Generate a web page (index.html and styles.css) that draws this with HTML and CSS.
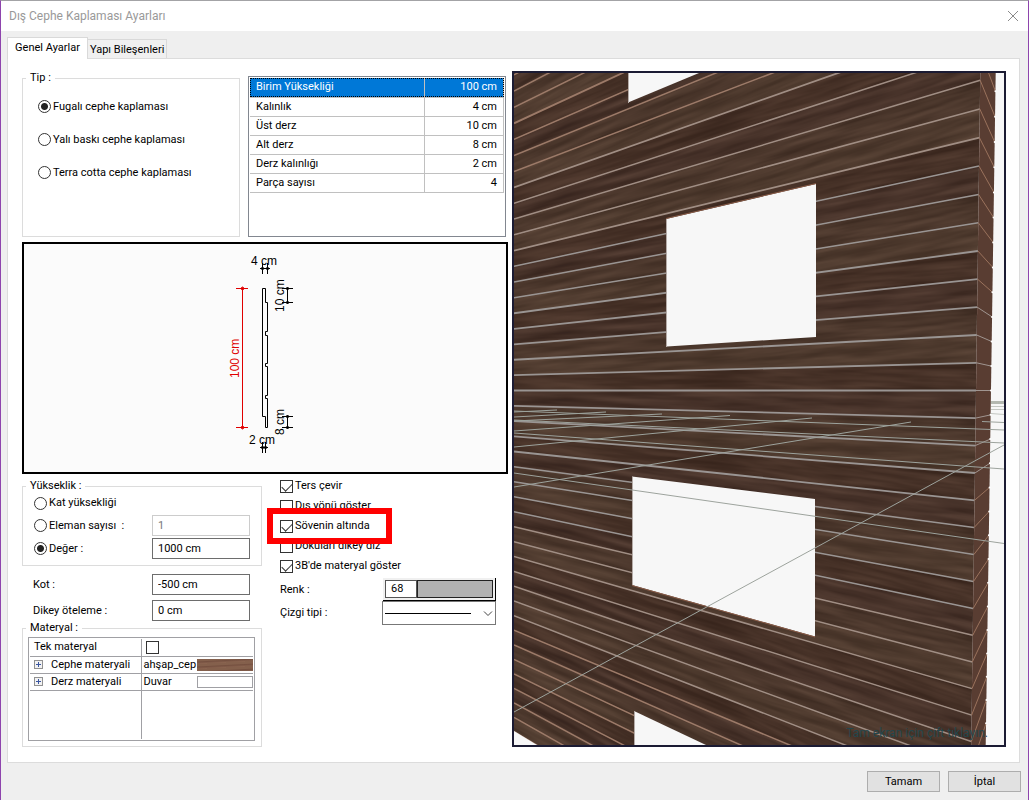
FILE: index.html
```html
<!DOCTYPE html>
<html lang="tr">
<head>
<meta charset="utf-8">
<meta name="viewport" content="width=device-width, initial-scale=1">
<title>Dış Cephe Kaplaması Ayarları</title>
<link rel="stylesheet" href="styles.css">
</head>
<body>
<div class="dialog">
  <header class="titlebar">
    <h1 class="title">Dış Cephe Kaplaması Ayarları</h1>
    <button class="close" type="button" aria-label="Kapat">
      <svg viewBox="0 0 10 10" width="10" height="10"><path d="M0 0 10 10M10 0 0 10" stroke="#8a8a8a" fill="none"/></svg>
    </button>
  </header>

  <nav class="tabs" role="tablist">
    <button class="tab tab-active" type="button" role="tab" aria-selected="true">Genel Ayarlar</button>
    <button class="tab" type="button" role="tab" aria-selected="false">Yapı Bileşenleri</button>
  </nav>

  <main class="panel">
    <div class="settings">
      <div class="top-row">
        <fieldset class="group type-group">
          <legend>Tip :</legend>
          <label class="option"><input type="radio" name="tip" checked>Fugalı cephe kaplaması</label>
          <label class="option"><input type="radio" name="tip">Yalı baskı cephe kaplaması</label>
          <label class="option"><input type="radio" name="tip">Terra cotta cephe kaplaması</label>
        </fieldset>
        <div class="list">
          <table class="props">
            <tr class="selected"><td>Birim Yüksekliği</td><td class="num">100 cm</td></tr>
            <tr><td>Kalınlık</td><td class="num">4 cm</td></tr>
            <tr><td>Üst derz</td><td class="num">10 cm</td></tr>
            <tr><td>Alt derz</td><td class="num">8 cm</td></tr>
            <tr><td>Derz kalınlığı</td><td class="num">2 cm</td></tr>
            <tr><td>Parça sayısı</td><td class="num">4</td></tr>
          </table>
        </div>
      </div>

      <div class="drawing">
        <svg class="drawing-svg" viewBox="24 244 482 228" fill="none" stroke="#000">
          <path d="M262.500 288.500h3v14h2v29h-2v4h2v28h-2v3h2v29h-2v3h2v29h-2v-11h-3z"/>
          <g stroke="#e00000">
            <path d="M242.500 288.500v139M236 288.500h12M236 427.500h12"/>
            <path fill="#e00000" d="M240.500 288.500l2-1.500 2 1.500-2 1.500zM240.500 427.500l2-1.500 2 1.500-2 1.500z"/>
          </g>
          <path d="M287.500 288.500v14M282 288.500h11M282 302.500h11M287.500 416.500v11M282 416.500h11M282 427.500h11"/>
          <path d="M262.500 263v11M267.500 263v11M260 268.500h10M262.500 442v11M265.500 442v11M260 447.500h8"/>
          <path fill="#000" d="M286 288.500l1.500-1.500 1.500 1.500-1.500 1.500zM286 302.500l1.500-1.500 1.500 1.500-1.500 1.500zM286 416.500l1.500-1.500 1.500 1.500-1.500 1.500zM286 427.500l1.500-1.500 1.500 1.500-1.500 1.500zM261 268.500l1.500-1.500 1.500 1.500-1.500 1.500zM266 268.500l1.500-1.500 1.500 1.500-1.500 1.500zM261 447.500l1.500-1.500 1.500 1.500-1.500 1.500zM264 447.500l1.500-1.500 1.500 1.500-1.500 1.500z"/>
          <g class="dim">
            <text x="251" y="265">4 cm</text>
            <text x="249" y="444">2 cm</text>
            <text transform="translate(284 312) rotate(-90)">10 cm</text>
            <text transform="translate(284 435) rotate(-90)">8 cm</text>
            <text class="dim-red" transform="translate(239 378) rotate(-90)">100 cm</text>
          </g>
        </svg>
      </div>

      <div class="bottom-row">
        <div class="left-stack">
          <fieldset class="group height-group">
            <legend>Yükseklik :</legend>
            <div class="row first"><label class="option"><input type="radio" name="h">Kat yüksekliği</label></div>
            <div class="row"><label class="option"><input type="radio" name="h">Eleman sayısı&nbsp; :</label><input class="text" type="text" value="1" aria-label="Eleman sayısı" disabled></div>
            <div class="row"><label class="option"><input type="radio" name="h" checked>Değer :</label><input class="text" type="text" value="1000 cm" aria-label="Değer"></div>
          </fieldset>
          <div class="offsets">
            <div class="row"><label for="kot">Kot :</label><input class="text" id="kot" type="text" value="-500 cm"></div>
            <div class="row"><label for="dikey">Dikey öteleme :</label><input class="text" id="dikey" type="text" value="0 cm"></div>
          </div>
          <fieldset class="group material-group">
            <legend>Materyal :</legend>
            <div class="tree">
              <table class="materials">
                <tr><td><label for="tek">Tek materyal</label></td><td><input type="checkbox" id="tek"></td></tr>
                <tr><td><div class="node"><button class="expand" type="button" aria-label="Genişlet"></button>Cephe materyali</div></td>
                  <td><div class="value"><span class="name">ahşap_cep</span><span class="swatch wood"></span></div></td></tr>
                <tr><td><div class="node"><button class="expand" type="button" aria-label="Genişlet"></button>Derz materyali</div></td>
                  <td><div class="value"><span class="name">Duvar</span><span class="swatch"></span></div></td></tr>
                <tr class="filler"><td></td><td></td></tr>
              </table>
            </div>
          </fieldset>
        </div>

        <div class="right-stack">
          <label class="check"><input type="checkbox" checked>Ters çevir</label>
          <label class="check"><input type="checkbox">Dış yönü göster</label>
          <label class="check marked"><input type="checkbox" checked>Sövenin altında</label>
          <label class="check"><input type="checkbox">Dokuları dikey diz</label>
          <label class="check"><input type="checkbox" checked>3B'de materyal göster</label>
          <div class="pick color-row"><label for="renk">Renk :</label>
            <div class="color"><input id="renk" type="text" value="68"><button class="color-chip" type="button" aria-label="Renk seç"></button></div></div>
          <div class="pick"><label for="cizgi">Çizgi tipi :</label>
            <div class="combo">
              <select id="cizgi"><option aria-label="Düz çizgi"></option></select>
              <svg class="combo-art" viewBox="0 0 112 22" fill="none"><path d="M2 11.500h86" stroke="#000"/><path d="M101 9.500l4 4 4-4" stroke="#444"/></svg>
            </div></div>
        </div>
      </div>
    </div>

    <div class="preview">
      <svg class="scene" id="scene" viewBox="514 73 490 672" preserveAspectRatio="xMidYMid slice">
        <defs>
          <filter id="grain" x="0" y="0" width="1" height="1" color-interpolation-filters="sRGB">
            <feTurbulence type="fractalNoise" baseFrequency="0.012 0.13" numOctaves="3" seed="7"/>
            <feColorMatrix values="0.8 0 0 0 -0.09  0.68 0 0 0 -0.11  0.6 0 0 0 -0.12  0 0 0 0 1"/>
          </filter>
        </defs>
        <g id="wall"></g>
        <g fill="#f7f7f7">
          <path d="M628 73v29.500L699 73z"/>
          <path d="M666 219 816 184V337L667 346.500z"/>
          <path d="M632 476.500 815 499V636.500L632 585z"/>
          <path d="M634 711V745H706z"/>
          <path d="M514 731V745H537z"/>
        </g>
        <g fill="none">
          <path d="M666 218.500 816 183.500M632 585.500 815 637" stroke="#8a5c48"/>
          <path d="M628.500 73v30M666.500 219v128M632.500 477v108M634.500 711v34" stroke="#b5aca8"/>
        </g>
        <g fill="none" stroke="#9da39d">
          <path d="M514 712 1004 445M514 487 911 422M514 447 812 418M514 431 730 415.500M514 421 662 414M514 417 606 412M514 412 557 410"/>
          <path d="M514 473 1004 543.500M514 433 1004 469M514 420 1004 443M514 411 1004 430M982 421.500l22 1"/>
          <path d="M991 406.500h13M991 409.500h13M991 413.500l13 1" stroke="#c4c7c2"/>
          <path d="M991 402.500h13" stroke="#b4b8b0" stroke-width="3"/>
        </g>
        <text class="hint" x="988" y="737" text-anchor="end">Tam ekran için çift tıklayın.</text>
      </svg>
    </div>
  </main>

  <footer class="footer">
    <button class="btn" type="button">Tamam</button>
    <button class="btn" type="button">İptal</button>
  </footer>
</div>
<script src="scene.js"></script>
</body>
</html>
```
FILE: styles.css
```css
* { box-sizing: border-box; }

body {
  margin: 0;
  font: 11px/14px Roboto, "Noto Sans", sans-serif;
  color: #000;
}

button, input, select { font: inherit; color: inherit; margin: 0; }

.dialog {
  min-height: 100vh;
  display: flex;
  flex-direction: column;
  background: #efefef;
  border: 1px solid #8e44ad;
  border-top-color: #a3a3a6;
}

.titlebar {
  display: flex;
  align-items: center;
  justify-content: space-between;
  height: 30px;
  padding: 0 10px 0 8px;
  background: #fff;
}
.title { margin: 0; font: 12px/16px Roboto, sans-serif; color: #999; }
.close { display: flex; padding: 0; border: 0; background: none; }

.tabs { display: flex; align-items: flex-end; height: 27px; padding-left: 6px; }
.tab {
  min-width: 79px;
  height: 19px;
  padding: 2px 2px 0;
  border: 1px solid #d9d9d9;
  border-left: 0;
  border-bottom: 0;
  background: #f0f0f0;
  white-space: nowrap;
}
.tab-active {
  position: relative;
  z-index: 1;
  min-width: 81px;
  height: 22px;
  margin-bottom: -1px;
  padding: 0 6px 1px;
  border-left: 1px solid #d9d9d9;
  background: #fff;
}

.panel {
  flex: 1;
  display: flex;
  gap: 4px;
  margin: 0 8px 0 6px;
  padding: 12px 13px 15px 14px;
  background: #fff;
  border: 1px solid #dcdcdc;
}

.settings { flex: none; width: 486px; display: flex; flex-direction: column; gap: 5px; }

.group { min-width: 0; margin: 0; border: 1px solid #dcdcdc; }
.group legend { margin-left: 3px; padding: 0 4px; line-height: 14px; }

.option, .check { display: flex; align-items: center; gap: 2px; white-space: nowrap; }

input[type="radio"], input[type="checkbox"] {
  appearance: none;
  flex: none;
  width: 13px;
  height: 13px;
  border: 1px solid #333;
  background: #fff;
}
input[type="radio"] { border-radius: 50%; }
input[type="radio"]:checked { background: radial-gradient(circle, #222 0 3px, #fff 4px); }
.check input:checked { display: grid; }
.check input:checked::before {
  content: "";
  width: 9px;
  height: 5px;
  margin: 2px 1px;
  border: solid #333;
  border-width: 0 0 1px 1px;
  transform: rotate(-45deg);
}

.top-row { display: flex; gap: 8px; height: 166px; }
.type-group { width: 218px; padding: 15px 0 0; }
.type-group .option { height: 13px; margin: 0 0 20px 15px; }
.list { flex: 1; margin: 5px 2px 0 0; padding: 1px; border: 1px solid #828790; }
.props { width: 100%; border-collapse: collapse; }
.props td { height: 19px; padding: 2px 6px; border: 1px solid #c0c0c0; border-width: 0 1px 1px 0; }
.props .num { width: 79px; text-align: right; }
.props .selected { background: #0078d7; color: #fff; outline: 1px dotted #000; outline-offset: -1px; }

.drawing { height: 232px; background: #fbfbfb; border: 2px solid #000; }
.drawing-svg { display: block; width: 100%; height: 100%; }
.dim { font: 12px "Liberation Sans", sans-serif; fill: #000; stroke: none; }
.dim-red { fill: #e00000; }

.bottom-row { display: flex; gap: 18px; }
.left-stack { width: 240px; }
.height-group { padding: 0 0 6px; }
.row { display: flex; align-items: center; justify-content: space-between; height: 21px; margin: 0 11px 2px; }
.row.first { height: 20px; }
.height-group .row:last-child { margin-bottom: 0; }
.text {
  width: 98px;
  height: 21px;
  padding: 0 5px;
  border: 1px solid #6d6d6d;
  background: #fff;
}
.text:disabled { border-color: #ccc; color: #777; }
.offsets { display: flex; flex-direction: column; gap: 5px; padding: 8px 1px 0 0; }
.offsets .row { margin-bottom: 0; }

.material-group { padding: 2px 0 5px; }
.tree { margin: 0 6px 0 5px; border: 1px solid #a0a0a4; padding: 1px; }
.materials { width: 100%; table-layout: fixed; border-collapse: collapse; }
.materials td { height: 17px; padding: 0 0 0 2px; border-bottom: 1px solid #a0a0a4; }
.materials td:first-child { width: 111px; padding: 0 4px; border-right: 1px solid #a0a0a4; }
.materials .filler td { height: 49px; border-bottom: 0; }
.materials input { display: block; margin-left: 2px; }
.node { display: flex; align-items: center; gap: 8px; white-space: nowrap; }
.expand {
  width: 9px;
  height: 9px;
  padding: 0;
  border: 1px solid #919191;
  background: linear-gradient(#3a56a0, #3a56a0) center / 5px 1px no-repeat, linear-gradient(#3a56a0, #3a56a0) center / 1px 5px no-repeat, #f2f2f2;
}
.value { display: flex; align-items: center; gap: 1px; }
.name { min-width: 52px; white-space: nowrap; }
.swatch { flex: 1; height: 12px; border: 1px solid #a0a0a4; }
.wood { border: 0; background: repeating-linear-gradient(177deg, #84604c 0 2px, #755040 3px, #8a6450 5px); }

.right-stack { width: 216px; }
.check { height: 20px; }
.check:first-child { margin-top: -3px; }
.marked { position: relative; }
.marked::after {
  content: "";
  position: absolute;
  inset: -8px 104px -8px -13px;
  border: 6px solid #f00;
}
.pick { display: flex; align-items: center; justify-content: space-between; }
.color-row { margin: 2px 0 0; }
.color {
  display: flex;
  width: 113px;
  height: 23px;
  padding: 2px;
  background: #f0f0f0;
  border: solid #000;
  border-width: 0 1px 1px 0;
}
.color input { width: 32px; padding: 0 5px; border: 1px solid #555; background: #fff; }
.color-chip { flex: 1; border: 1px solid #222; background: #b2b2b2; }
.combo { display: grid; width: 114px; height: 24px; }
.combo select, .combo-art { grid-area: 1 / 1; width: 100%; height: 100%; }
.combo select { appearance: none; border: 1px solid #777; background: #fff; }
.combo-art { padding: 1px; pointer-events: none; }

.preview { flex: 1; min-width: 0; display: flex; background: #f7f7f7; border: 2px solid #1b1b33; }
.scene { flex: 1; min-width: 0; width: 100%; height: 100%; }
.hint { font: 12px Roboto, sans-serif; fill: #24464c; }

.footer { display: flex; justify-content: flex-end; gap: 8px; padding: 8px 7px; }
.btn { width: 73px; height: 21px; padding: 0; border: 1px solid #adadad; background: #e1e1e1; }
```
FILE: scene.js
```js
// Draws the clad wall in perspective. Joint 0 lies on the horizon;
// positive numbers go up, negative numbers go down.
const SVG = "http://www.w3.org/2000/svg";
const wall = document.getElementById("wall");
const HORIZON = 390.5;
const LEFT = 514;

const leftY = k => HORIZON - k * (15.34 + 0.022 * k);
const cornerY = k => HORIZON - k * (27.65 + 0.05 * k);
const sideY = k => HORIZON - k * (24.4 + 0.045 * k);
const cornerX = y => 976 - (y - 390) * 0.0135;
const outerX = y => 991 - (y - 390) * 0.0148;

function add(parent, name, attrs) {
  const node = document.createElementNS(SVG, name);
  for (const key in attrs) node.setAttribute(key, attrs[key]);
  parent.appendChild(node);
  return node;
}

const corner = k => `${cornerX(cornerY(k)).toFixed(1)} ${cornerY(k).toFixed(1)}`;
const outer = k => `${outerX(sideY(k)).toFixed(1)} ${sideY(k).toFixed(1)}`;
const tones = ["#432e26", "#47332b", "#4a362c", "#4e3a2e"];

for (let k = 22; k > -26; k--) {
  const tone = tones[((1 - k) % 4 + 4) % 4];
  add(wall, "path", {
    d: `M${LEFT} ${leftY(k)}L${corner(k)}L${corner(k - 1)}L${LEFT} ${leftY(k - 1)}z`,
    fill: tone
  });
}

for (let top = 21; top > -26; top -= 4) {
  const id = "band" + (top + 30);
  const clip = add(wall, "clipPath", { id });
  add(clip, "path", {
    d: `M${LEFT} ${leftY(top)}L${corner(top)}L${corner(top - 4)}L${LEFT} ${leftY(top - 4)}z`
  });
  const group = add(wall, "g", { "clip-path": `url(#${id})` });
  const mid = top - 2;
  const angle = Math.atan((cornerY(mid) - leftY(mid)) / 463) * 180 / Math.PI;
  add(group, "rect", {
    x: 0, y: -70, width: 480, height: 140, filter: "url(#grain)", opacity: 0.24,
    transform: `translate(${LEFT} ${leftY(mid)}) skewY(${angle})`
  });
}

add(wall, "path", { d: "M980.300 73H995.700L985.700 745H971.200z", fill: "#593d32" });

for (let k = 21; k > -25; k--) {
  const far = Math.abs(k) > 8;
  add(wall, "path", {
    d: `M${LEFT} ${leftY(k)}L${corner(k)}`,
    stroke: k > 13 || k < -15 ? "#9c7a68" : far ? "#a08e84" : "#9a9593",
    "stroke-width": k % 4 === 1 || Math.abs(k) < 5 ? 1.8 : 1.5,
    fill: "none"
  });
  add(wall, "path", {
    d: `M${corner(k)}L${outer(k)}`,
    stroke: Math.abs(k) < 4 ? "#a09590" : "#9a725c",
    fill: "none"
  });
  add(wall, "circle", { cx: outerX(sideY(k)), cy: sideY(k), r: 1, fill: "#fff" });
}
```
